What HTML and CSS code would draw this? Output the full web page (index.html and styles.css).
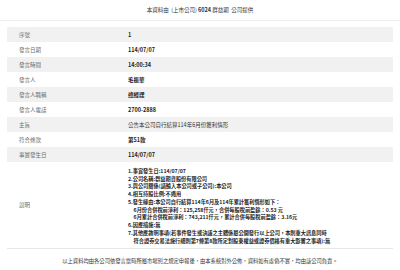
FILE: index.html
```html
<!DOCTYPE html>
<html lang="zh-Hant">
<head>
<meta charset="utf-8">
<link rel="stylesheet" href="styles.css">
</head>
<body>
<div class="page">
  <div class="head">本資料由&nbsp;&nbsp;(上市公司)&nbsp;<b>6024</b>&nbsp;群益期&nbsp;&nbsp;公司提供</div>
  <div class="table">
    <div class="row alt"><div class="lbl">序號</div><div class="val">1</div></div>
    <div class="row"><div class="lbl">發言日期</div><div class="val">114/07/07</div></div>
    <div class="row alt"><div class="lbl">發言時間</div><div class="val">14:00:34</div></div>
    <div class="row"><div class="lbl">發言人</div><div class="val">毛振華</div></div>
    <div class="row alt"><div class="lbl">發言人職稱</div><div class="val">總經理</div></div>
    <div class="row"><div class="lbl">發言人電話</div><div class="val">2700-2888</div></div>
    <div class="row alt"><div class="lbl">主旨</div><div class="val norm">公告本公司自行結算114年6月份獲利情形</div></div>
    <div class="row"><div class="lbl">符合條款</div><div class="val">第51款</div></div>
    <div class="row alt"><div class="lbl">事實發生日</div><div class="val">114/07/07</div></div>
    <div class="row desc"><div class="lbl">說明</div>
      <div class="val text">
        <div>1.事實發生日:114/07/07</div>
        <div>2.公司名稱:群益期貨股份有限公司</div>
        <div>3.與公司關係(請輸入本公司或子公司):本公司</div>
        <div>4.相互持股比例:不適用</div>
        <div>5.發生緣由:本公司自行結算114年6月及114年累計獲利情形如下：</div>
        <div class="ind">6月份合併稅前淨利：125,258仟元，合併每股稅前盈餘：0.53 元</div>
        <div class="ind">6月累計合併稅前淨利：743,211仟元，累計合併每股稅前盈餘：3.16元</div>
        <div>6.因應措施:無</div>
        <div>7.其他應敘明事項(若事件發生或決議之主體係屬公開發行以上公司，本則重大訊息同時</div>
        <div class="ind">符合證券交易法施行細則第7條第8款所定對股東權益或證券價格有重大影響之事項):無</div>
      </div>
    </div>
  </div>
  <div class="foot">以上資料均由各公司依發言當時所屬市場別之規定申報後，由本系統對外公佈，資料如有虛偽不實，均由該公司負責。</div>
</div>
</body>
</html>
```

FILE: styles.css
```css
html, body {
  margin: 0;
  padding: 0;
  background: #ffffff;
}
body {
  font-family: "Noto Sans CJK TC", "Noto Sans", sans-serif;
  color: #333;
}
.page {
  width: 400px;
  height: 270px;
  overflow: hidden;
}
.head {
  height: 21px;
  line-height: 21px;
  text-align: center;
  font-size: 5.5px;
  color: #333;
  border-bottom: 1px solid #ececec;
  box-sizing: border-box;
}
.head b {
  font-weight: 700;
}
.table {
  margin: 6px 7px 0;
  border-bottom: 1px solid #e6e6e6;
}
.row {
  display: grid;
  grid-template-columns: 121px 1fr;
  height: 15px;
  align-items: center;
  font-size: 5.5px;
}
.row.alt {
  background: #f1f1f1;
}
.lbl {
  padding-left: 12px;
  color: #6a6a6a;
}
.val {
  color: #222;
  font-weight: 700;
}
.val.norm {
  font-weight: 400;
  color: #333;
}
.row.desc {
  height: 86px;
}
.text {
  font-size: 5.2px;
  line-height: 7.75px;
  padding: 1px 0 0;
}
.text .ind {
  padding-left: 5.6px;
}
.foot {
  text-align: center;
  font-size: 5.3px;
  color: #333;
  margin-top: 8px;
}
```
